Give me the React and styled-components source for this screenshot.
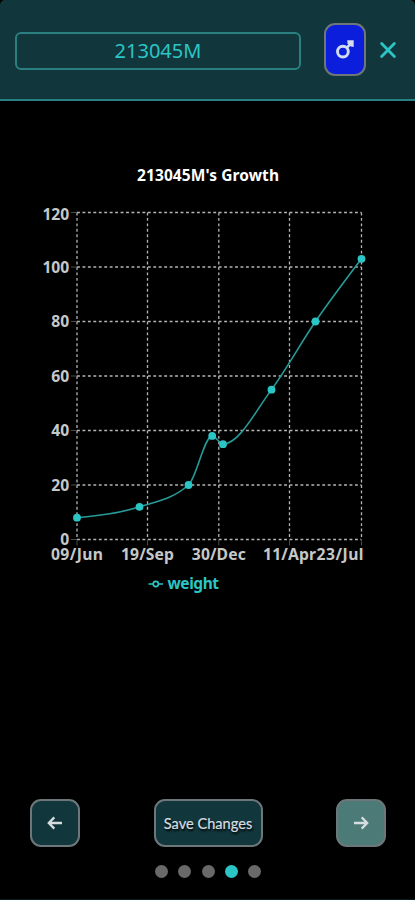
import React from 'react';
import styled, { createGlobalStyle, css } from 'styled-components';

const colors = {
  panel: '#11363b',
  panelLine: '#2a7f81',
  accent: '#2cc5c5',
  curve: '#279b98',
  tick: '#c6c8c8',
  grid: '#b4b4b4',
  blue: '#0b1edb',
  buttonLine: '#6d7779',
};

const GlobalStyle = createGlobalStyle`
  * {
    box-sizing: border-box;
  }

  body {
    margin: 0;
    background: #000;
    font-family: 'Noto Sans', 'Open Sans', sans-serif;
  }
`;

const Screen = styled.main`
  display: flex;
  flex-direction: column;
  height: 900px;
  width: 415px;
  overflow: hidden;
  background: #000;
  border-bottom: 1px solid #071c1e;
`;

const Header = styled.header`
  display: flex;
  align-items: center;
  flex: none;
  height: 101px;
  padding: 0 17px 0 15px;
  background: ${colors.panel};
  border-bottom: 2px solid ${colors.panelLine};
  border-radius: 5px 5px 0 0;
`;

const NameInput = styled.input`
  width: 286px;
  height: 38px;
  margin: 2px 23px 0 0;
  padding: 0 0 1px;
  background: transparent;
  border: 2px solid ${colors.panelLine};
  border-radius: 6px;
  color: ${colors.accent};
  font-family: inherit;
  font-size: 20px;
  text-align: center;
  outline: none;
`;

const Button = styled.button`
  display: flex;
  align-items: center;
  justify-content: center;
  width: ${({ $width }) => $width}px;
  height: ${({ $height }) => $height || 48}px;
  padding: 0;
  background: ${({ $background }) => $background || colors.panel};
  border: 2px solid ${colors.buttonLine};
  border-radius: 11px;
  color: #d5dde0;
  font-family: Lato, sans-serif;
  font-size: 14.6px;
  font-weight: 400;
  white-space: nowrap;
  text-shadow: 1px 2px 2px #000;
  -webkit-text-stroke: 0.2px #d5dde0;
`;

const CloseButton = styled.button`
  display: flex;
  margin-left: auto;
  padding: 0;
  background: none;
  border: 0;
  color: ${colors.accent};
`;

const Content = styled.section`
  flex: 1;
  min-height: 0;
`;

const ChartSvg = styled.svg`
  display: block;

  text {
    font-family: 'Noto Sans', 'Open Sans', sans-serif;
    font-weight: 700;
  }
`;

const Footer = styled.footer`
  flex: none;
  height: 100px;
`;

const Actions = styled.div`
  display: flex;
  justify-content: space-between;
  padding: 0 29px 0 30px;
`;

const Dots = styled.div`
  display: flex;
  justify-content: center;
  gap: 10.2px;
  margin-top: 18px;
  padding-left: 1px;
`;

const Dot = styled.span`
  width: 13px;
  height: 13px;
  border-radius: 50%;
  background: #696969;
  ${({ $active }) => $active && css`
    background: ${colors.accent};
  `}
`;

const TOP = 101;
const plot = { left: 77, right: 361.5, top: 212.5 - TOP, bottom: 539.5 - TOP };

const xTicks = [
  { x: 77, label: '09/Jun', width: 52 },
  { x: 147.5, label: '19/Sep', width: 53 },
  { x: 218.8, label: '30/Dec', width: 54 },
  { x: 289.5, label: '11/Apr', width: 53 },
  { x: 361.5, label: '23/Jul', width: 47, textX: 340 },
];

const yTicks = [0, 20, 40, 60, 80, 100, 120];

const weights = [
  [77, 8],
  [139.5, 12],
  [188.5, 20],
  [212.2, 38],
  [223, 35],
  [271.5, 55],
  [315.5, 80],
  [361.5, 103],
];

const yScale = (value) => plot.bottom - (value / 120) * (plot.bottom - plot.top);

// Monotone cubic interpolation, so the line never overshoots a reading
const monotonePath = (points) => {
  const last = points.length - 1;
  const slope = (i) => (points[i + 1][1] - points[i][1]) / (points[i + 1][0] - points[i][0]);
  const tangents = points.map(() => 0);

  for (let i = 1; i < last; i += 1) {
    const h0 = points[i][0] - points[i - 1][0];
    const h1 = points[i + 1][0] - points[i][0];
    const s0 = slope(i - 1);
    const s1 = slope(i);
    const p = (s0 * h1 + s1 * h0) / (h0 + h1);
    tangents[i] = (Math.sign(s0) + Math.sign(s1)) * Math.min(Math.abs(s0), Math.abs(s1), Math.abs(p) / 2);
  }
  tangents[0] = (3 * slope(0) - tangents[1]) / 2;
  tangents[last] = (3 * slope(last - 1) - tangents[last - 1]) / 2;

  return points.slice(1).reduce((path, [x, y], i) => {
    const [px, py] = points[i];
    const d = (x - px) / 3;
    return `${path}C${px + d},${py + d * tangents[i]},${x - d},${y - d * tangents[i + 1]},${x},${y}`;
  }, `M${points[0][0]},${points[0][1]}`);
};

const MaleIcon = () => (
  <svg width="22" height="22" viewBox="0 0 22 22" fill="none" stroke="#d3dcef">
    <circle cx="8.9" cy="12.6" r="5.4" strokeWidth="2.9" />
    <path d="M12.6 8.9L16.5 5" strokeWidth="2.6" />
    <path d="M13.2 1.2H19.7V7.9L16.9 7.6L13.5 4.2Z" fill="#d3dcef" stroke="none" />
  </svg>
);

const CloseIcon = () => (
  <svg width="20" height="20" viewBox="0 0 20 20" fill="none" stroke="currentColor" strokeWidth="2.8" strokeLinecap="round">
    <path d="M3.6 3.6L16.4 16.4M16.4 3.6L3.6 16.4" />
  </svg>
);

const ArrowIcon = ({ right }) => (
  <svg width="16" height="16" viewBox="0 0 16 16" fill="none" stroke="currentColor" strokeWidth="2.3">
    <path d={right ? 'M1 8H14M8.7 2.4L14.2 8L8.7 13.6' : 'M15 8H2M7.3 2.4L1.8 8L7.3 13.6'} />
  </svg>
);

const GrowthChart = ({ title }) => {
  const points = weights.map(([x, value]) => [x, yScale(value)]);

  return (
    <ChartSvg width="415" height="520" viewBox="0 0 415 520">
      <text x="137" y={181 - TOP} fontSize="15.5" fill="#fff" textLength="142">{title}</text>
      <g stroke={colors.grid} strokeWidth="1.3" strokeDasharray="2.9 2.55">
        {yTicks.map((value) => (
          <line key={value} x1={plot.left} x2={plot.right} y1={yScale(value)} y2={yScale(value)} />
        ))}
        {xTicks.map(({ x }) => (
          <line key={x} x1={x} x2={x} y1={plot.top} y2={plot.bottom} />
        ))}
      </g>
      <g stroke="#4a4a4a" strokeWidth="1">
        {yTicks.map((value) => (
          <line key={value} x1={plot.left - 6} x2={plot.left} y1={yScale(value)} y2={yScale(value)} />
        ))}
        {xTicks.map(({ x }) => (
          <line key={x} x1={x} x2={x} y1={plot.bottom} y2={plot.bottom + 6} />
        ))}
      </g>
      <g fill={colors.tick} fontSize="15.7">
        {yTicks.map((value) => (
          <text key={value} x="69.3" y={yScale(value) + (value === 120 ? 7.7 : 5.6)} textAnchor="end">{value}</text>
        ))}
        {xTicks.map(({ x, label, width, textX }) => (
          <text key={label} x={textX || x} y={559.5 - TOP} textAnchor="middle" textLength={width}>{label}</text>
        ))}
      </g>
      <path d={monotonePath(points)} fill="none" stroke={colors.curve} strokeWidth="1.6" />
      {points.map(([x, y]) => (
        <circle key={x} cx={x} cy={y} r="3.9" fill={colors.accent} />
      ))}
      <g fill="none" stroke={colors.accent} strokeWidth="1.6">
        <path d={`M148.5 ${584 - TOP}H153M158.5 ${584 - TOP}H163`} />
        <circle cx="155.8" cy={584 - TOP} r="2.6" />
      </g>
      <text x="167.5" y={589 - TOP} fontSize="15.5" fill={colors.accent} textLength="51.5">weight</text>
    </ChartSvg>
  );
};

const App = () => (
  <>
    <GlobalStyle />
    <Screen>
      <Header>
        <NameInput defaultValue="213045M" aria-label="Name" />
        <Button $width={42} $height={53} $background={colors.blue} aria-label="Male">
          <MaleIcon />
        </Button>
        <CloseButton aria-label="Close">
          <CloseIcon />
        </CloseButton>
      </Header>
      <Content>
        <GrowthChart title="213045M's Growth" />
      </Content>
      <Footer>
        <Actions>
          <Button $width={50} aria-label="Previous">
            <ArrowIcon />
          </Button>
          <Button $width={109}>Save Changes</Button>
          <Button $width={50} $background="#4b7a77" aria-label="Next">
            <ArrowIcon right />
          </Button>
        </Actions>
        <Dots>
          {[0, 1, 2, 3, 4].map((step) => (
            <Dot key={step} $active={step === 3} />
          ))}
        </Dots>
      </Footer>
    </Screen>
  </>
);

export default App;
